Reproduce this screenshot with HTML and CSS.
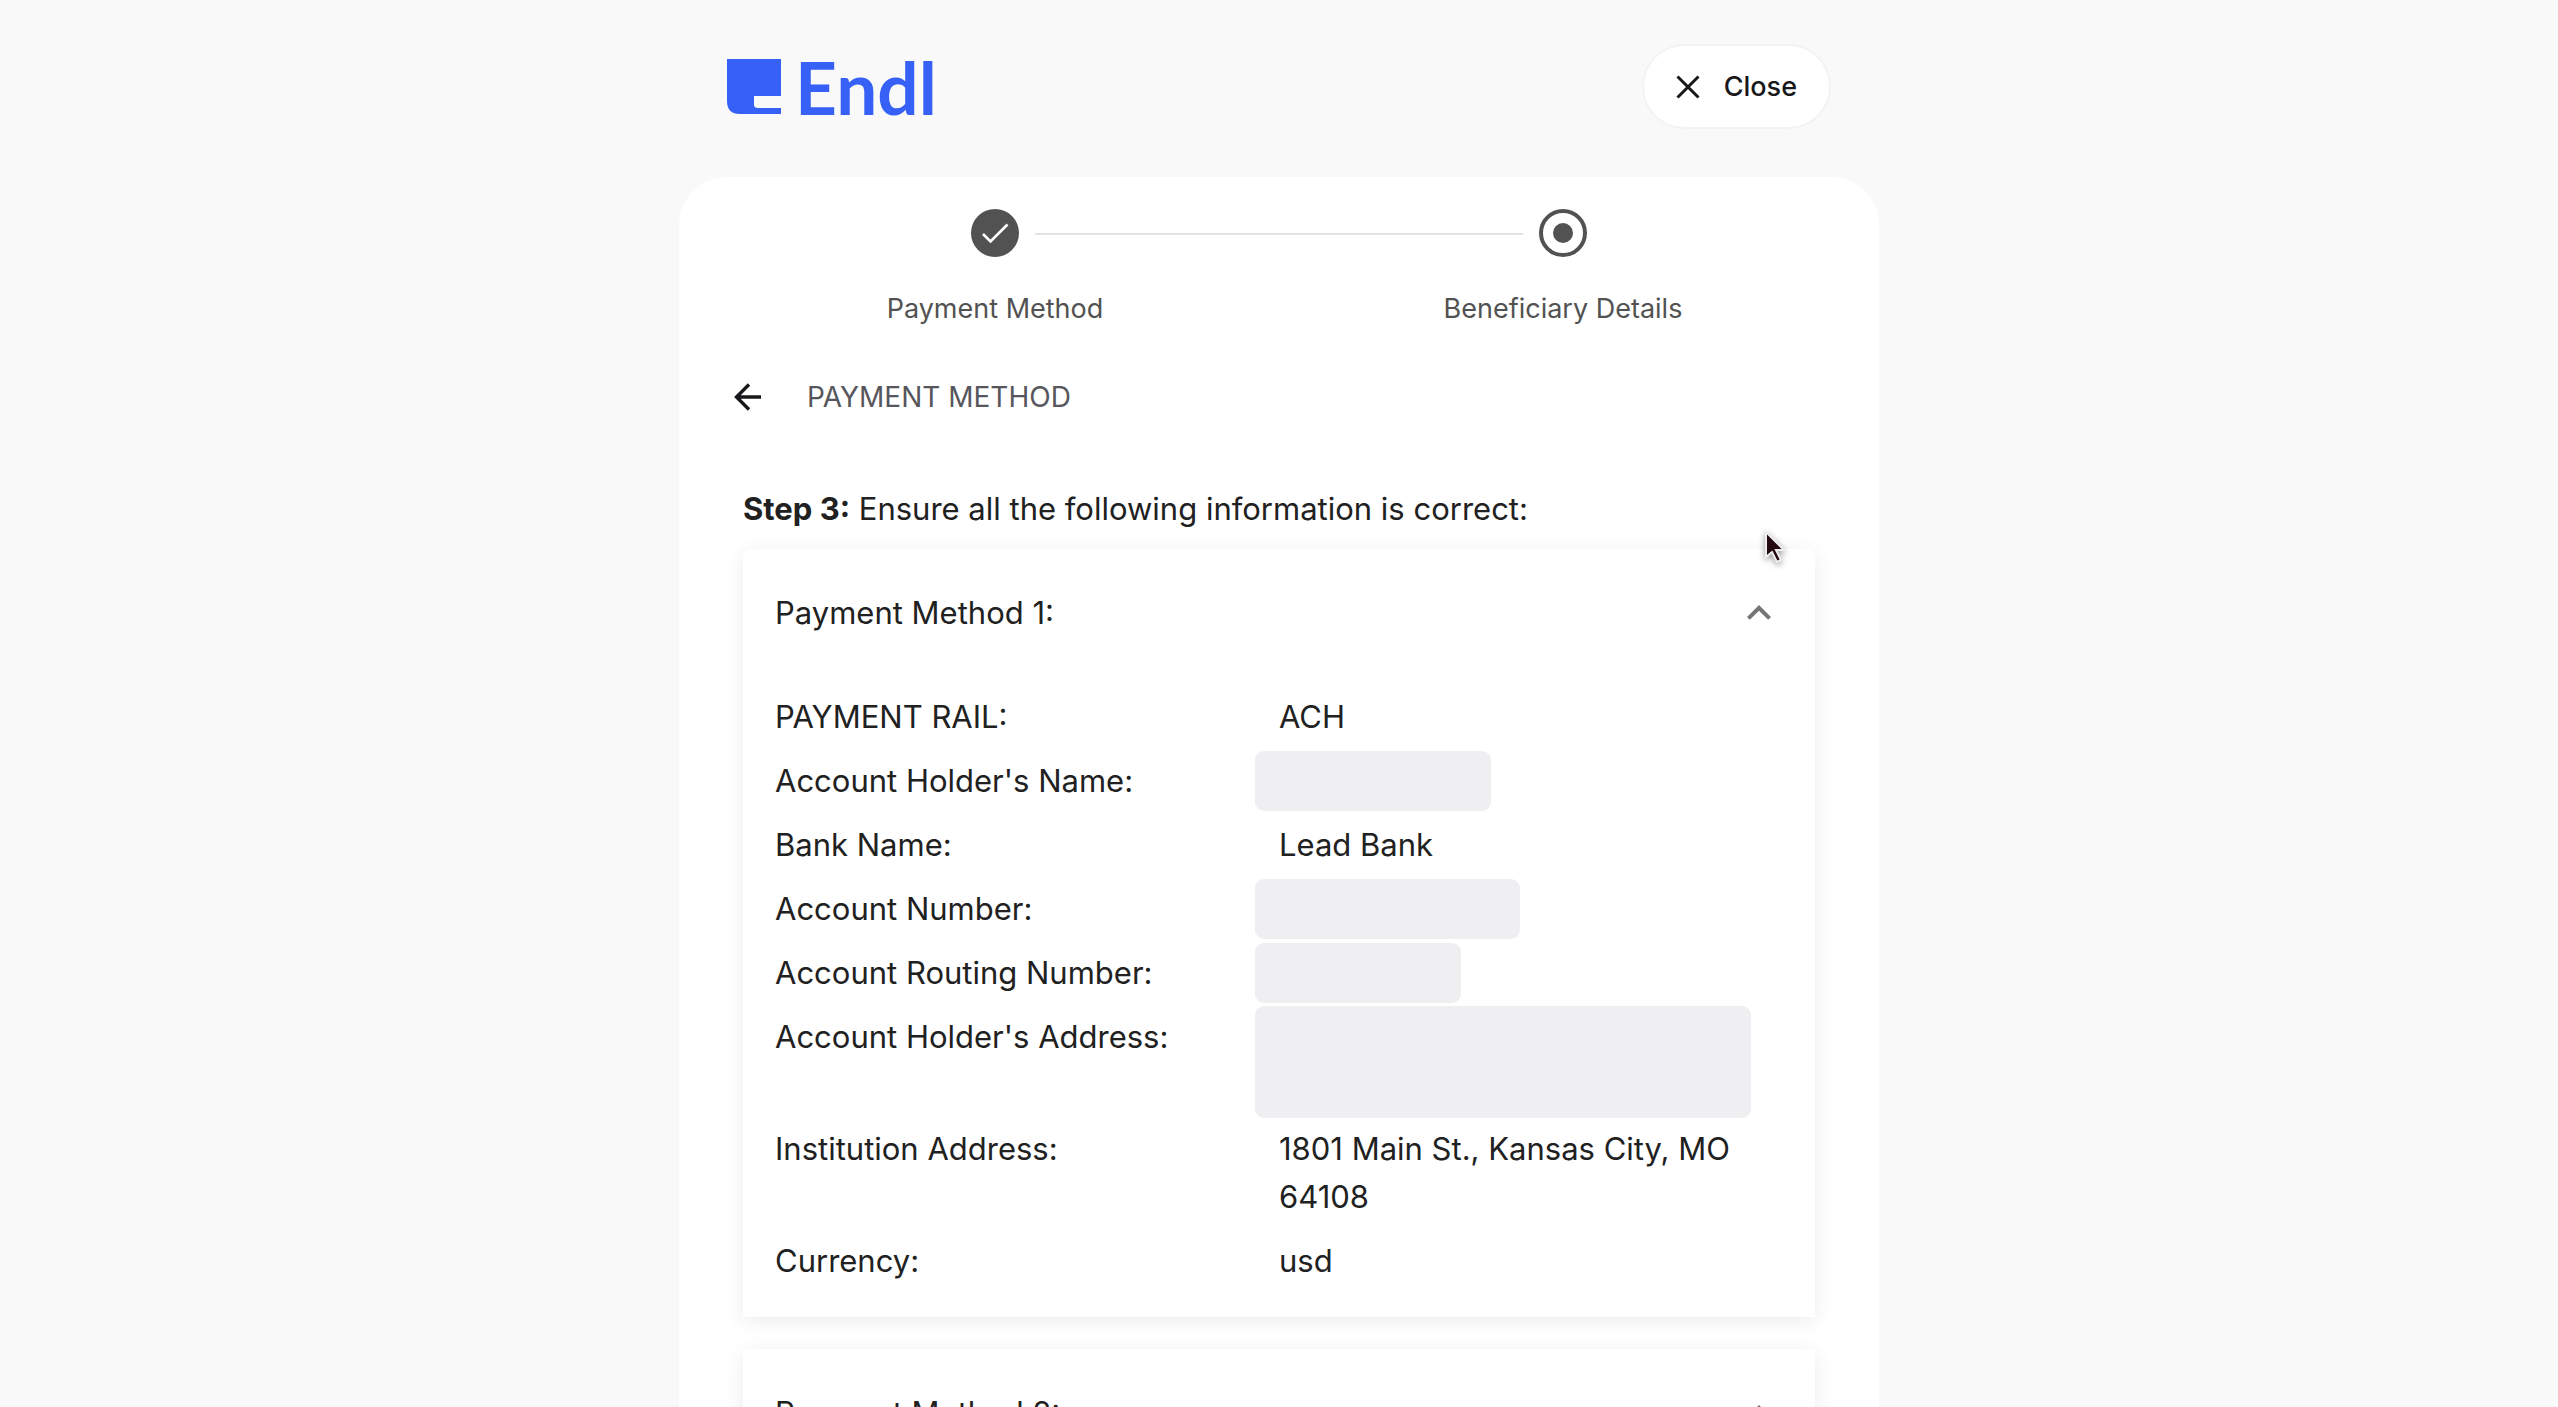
FILE: index.html
```html
<!DOCTYPE html>
<html lang="en">
<head>
    <meta charset="UTF-8">
    <meta name="viewport" content="width=device-width, initial-scale=1">
    <title>Endl</title>
    <link rel="stylesheet" href="styles.css">
</head>
<body>
<div class="page">
    <header class="header">
        <a class="logo" href="#">
            <svg class="logo-mark" viewBox="0 0 54 55" aria-hidden="true">
                <path d="M0 0H54V37H27V46Q27 49 31 49H54V55H13Q0 55 0 42Z"/>
            </svg>
            <span>Endl</span>
        </a>
        <button class="close" type="button">
            <svg class="close-icon" viewBox="0 0 24 24" aria-hidden="true">
                <path d="M1.5 1.5L22.5 22.5M22.5 1.5L1.5 22.5"/>
            </svg>
            Close
        </button>
    </header>

    <main class="card">
        <ol class="stepper">
            <li class="step">
                <svg class="step-icon" viewBox="0 0 48 48" aria-hidden="true">
                    <circle cx="24" cy="24" r="24" fill="#525252"/>
                    <path d="M12 25L19.5 32.5L36.5 15.5" fill="none" stroke="#fff" stroke-width="2.6"/>
                </svg>
                <span>Payment Method</span>
            </li>
            <li class="step">
                <svg class="step-icon" viewBox="0 0 48 48" aria-hidden="true">
                    <circle cx="24" cy="24" r="22" fill="none" stroke="#525252" stroke-width="4"/>
                    <circle cx="24" cy="24" r="10" fill="#525252"/>
                </svg>
                <span>Beneficiary Details</span>
            </li>
        </ol>

        <div class="back-row">
            <button class="back" type="button" aria-label="Back">
                <svg viewBox="0 0 48 48" aria-hidden="true">
                    <path d="M38 24H13M26 11.5L13.5 24L26 36.5"/>
                </svg>
            </button>
            <h1 class="back-title">PAYMENT METHOD</h1>
        </div>

        <section class="content">
            <p class="intro"><strong>Step 3:</strong> Ensure all the following information is correct:</p>

            <details class="method" open>
                <summary class="method-head">
                    Payment Method 1:
                    <svg class="chevron" viewBox="0 0 24 24" aria-hidden="true">
                        <path d="M12 8l-6 6 1.41 1.41L12 10.83l4.59 4.58L18 14z"/>
                    </svg>
                </summary>
                <dl class="fields">
                    <dt>PAYMENT RAIL:</dt>
                    <dd>ACH</dd>
                    <dt>Account Holder's Name:</dt>
                    <dd><span class="hidden-value name"></span></dd>
                    <dt>Bank Name:</dt>
                    <dd>Lead Bank</dd>
                    <dt>Account Number:</dt>
                    <dd><span class="hidden-value number"></span></dd>
                    <dt>Account Routing Number:</dt>
                    <dd><span class="hidden-value routing"></span></dd>
                    <dt>Account Holder's Address:</dt>
                    <dd><span class="hidden-value address"></span></dd>
                    <dt>Institution Address:</dt>
                    <dd>1801 Main St., Kansas City, MO 64108</dd>
                    <dt>Currency:</dt>
                    <dd>usd</dd>
                </dl>
                <svg class="cursor" viewBox="0 0 28 40" aria-hidden="true">
                    <path d="M4 3V28L10 23L15 33L19 31L14 21H22Z" fill="#240a10" stroke="#eee" stroke-width="2"/>
                </svg>
            </details>

            <details class="method" open>
                <summary class="method-head">
                    Payment Method 2:
                    <svg class="chevron" viewBox="0 0 24 24" aria-hidden="true">
                        <path d="M12 8l-6 6 1.41 1.41L12 10.83l4.59 4.58L18 14z"/>
                    </svg>
                </summary>
            </details>
        </section>
    </main>
</div>
</body>
</html>
```

FILE: styles.css
```css
* {
    box-sizing: border-box;
    margin: 0;
    padding: 0;
}

body {
    background: #f9f9f9;
    color: #212121;
    font-family: Inter, "Liberation Sans", sans-serif;
    font-size: 31px;
    line-height: 48px;
}

button {
    border: none;
    background: none;
    color: inherit;
    font: inherit;
    cursor: pointer;
}

.page {
    max-width: 1200px;
    margin: 0 auto;
}

/* header */
.header {
    display: flex;
    justify-content: space-between;
    align-items: center;
    padding: 44px 48px 48px;
}

.logo {
    display: flex;
    align-items: center;
    gap: 14px;
    color: #3761f6;
    font-family: Lato, Inter, sans-serif;
    font-size: 73px;
    font-weight: 700;
    line-height: 84px;
    text-decoration: none;
}

.logo-mark {
    width: 54px;
    height: 55px;
    fill: #3761f6;
}

.close {
    display: flex;
    align-items: center;
    gap: 24px;
    height: 85px;
    padding: 0 32px;
    border: 2px solid #f3f3f3;
    border-radius: 43px;
    background: #fff;
    color: #18181b;
    font-size: 27px;
    font-weight: 500;
}

.close-icon {
    width: 24px;
    height: 24px;
    stroke: #18181b;
    stroke-width: 3;
}

.card {
    padding: 32px 32px 64px;
    border-radius: 48px 48px 0 0;
    background: #fff;
}

/* stepper */
.stepper {
    display: flex;
    list-style: none;
}

.step {
    position: relative;
    display: flex;
    flex: 1;
    flex-direction: column;
    align-items: center;
    gap: 28px;
    color: #525252;
    font-size: 27px;
}

.step-icon {
    width: 48px;
    height: 48px;
}

/* line between the two step circles */
.step + .step::before {
    content: "";
    position: absolute;
    top: 24px;
    left: calc(-50% + 40px);
    right: calc(50% + 40px);
    height: 2px;
    background: #e4e4e4;
}

.back-row {
    display: flex;
    align-items: center;
    gap: 36px;
    padding: 40px 12px;
}

.back {
    width: 48px;
    height: 48px;
}

.back svg {
    display: block;
    fill: none;
    stroke: #18181b;
    stroke-width: 3.4;
}

.back-title {
    color: #56565c;
    font-size: 28px;
    font-weight: 400;
}

/* payment methods */
.content {
    padding: 24px 32px 0;
}

.intro {
    margin-bottom: 16px;
}

.method {
    position: relative;
    margin-bottom: 32px;
    border-radius: 8px 8px 0 0;
    background: #fff;
    box-shadow: 0 4px 20px rgba(0, 0, 0, 0.08);
}

.method + .method {
    border-radius: 0;
}

.method-head {
    display: flex;
    justify-content: space-between;
    align-items: center;
    padding: 40px 32px;
    cursor: pointer;
}

.chevron {
    width: 48px;
    height: 48px;
    fill: #757575;
    transform: rotate(180deg);
}

.method[open] .chevron {
    transform: none;
}

.fields {
    display: grid;
    grid-template-columns: 1fr 1fr;
    row-gap: 16px;
    padding: 16px 32px 32px;
}

.hidden-value {
    display: block;
    height: 60px;
    margin: -6px 0 -6px -24px;
    border-radius: 9px;
    background: #efeff1;
}

.name {
    width: 236px;
}

.number {
    width: 265px;
}

.routing {
    width: 206px;
}

.address {
    width: 496px;
    height: 112px;
    margin: -7px 0 -9px -24px;
}

.cursor {
    position: absolute;
    top: -20px;
    right: 25px;
    width: 28px;
    height: 40px;
    filter: drop-shadow(0 2px 3px rgba(0, 0, 0, 0.4));
}
```
